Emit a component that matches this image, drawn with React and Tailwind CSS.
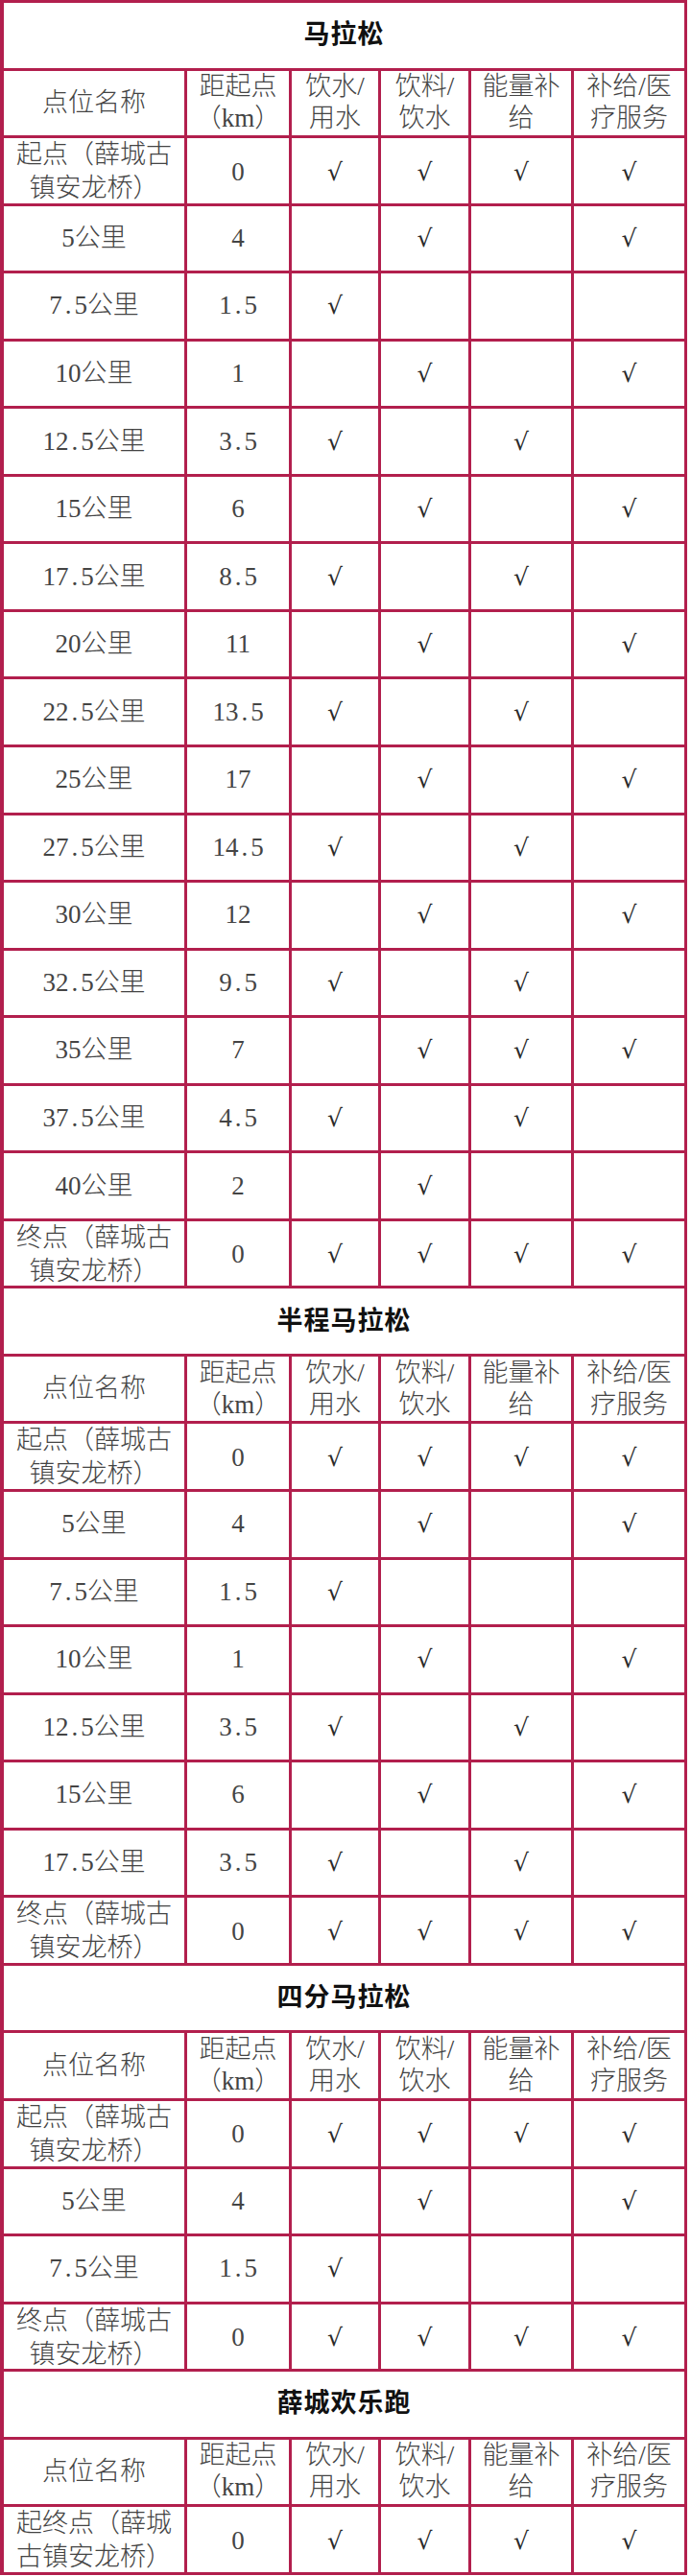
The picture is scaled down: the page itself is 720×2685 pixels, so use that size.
import React from "react";

const V = "√";
const _ = "";

const START = ["起点（薛城古", "镇安龙桥）"];
const END = ["终点（薛城古", "镇安龙桥）"];
const FUN = ["起终点（薛城", "古镇安龙桥）"];

const sections = [
  {
    title: "马拉松",
    rows: [
      [START, "0", V, V, V, V],
      ["5公里", "4", _, V, _, V],
      ["7.5公里", "1.5", V, _, _, _],
      ["10公里", "1", _, V, _, V],
      ["12.5公里", "3.5", V, _, V, _],
      ["15公里", "6", _, V, _, V],
      ["17.5公里", "8.5", V, _, V, _],
      ["20公里", "11", _, V, _, V],
      ["22.5公里", "13.5", V, _, V, _],
      ["25公里", "17", _, V, _, V],
      ["27.5公里", "14.5", V, _, V, _],
      ["30公里", "12", _, V, _, V],
      ["32.5公里", "9.5", V, _, V, _],
      ["35公里", "7", _, V, V, V],
      ["37.5公里", "4.5", V, _, V, _],
      ["40公里", "2", _, V, _, _],
      [END, "0", V, V, V, V],
    ],
  },
  {
    title: "半程马拉松",
    rows: [
      [START, "0", V, V, V, V],
      ["5公里", "4", _, V, _, V],
      ["7.5公里", "1.5", V, _, _, _],
      ["10公里", "1", _, V, _, V],
      ["12.5公里", "3.5", V, _, V, _],
      ["15公里", "6", _, V, _, V],
      ["17.5公里", "3.5", V, _, V, _],
      [END, "0", V, V, V, V],
    ],
  },
  {
    title: "四分马拉松",
    rows: [
      [START, "0", V, V, V, V],
      ["5公里", "4", _, V, _, V],
      ["7.5公里", "1.5", V, _, _, _],
      [END, "0", V, V, V, V],
    ],
  },
  {
    title: "薛城欢乐跑",
    rows: [[FUN, "0", V, V, V, V]],
  },
];

function Num({ s }) {
  const parts = s.split(".");
  if (parts.length === 1) return <>{s}</>;
  return (
    <>
      {parts[0]}
      <span className="mx-[3px]">.</span>
      {parts[1]}
    </>
  );
}

function NameText({ v }) {
  if (Array.isArray(v)) {
    return (
      <span className="leading-[35px]">
        {v[0]}
        <br />
        {v[1]}
      </span>
    );
  }
  const m = v.match(/^([\d.]+)(.*)$/);
  return (
    <span>
      <Num s={m[1]} />
      {m[2]}
    </span>
  );
}

const cell =
  "flex items-center justify-center text-center border-r-[3px] border-[#b21f4d]";
const gridRow =
  "grid grid-cols-[191px_109px_93px_94px_107px_118px] h-[70.55px] border-b-[3px] border-[#b21f4d]";

function Header() {
  return (
    <div className={gridRow}>
      <div className={cell}>点位名称</div>
      <div className={cell + " leading-[33px]"}>
        <span>
          距起点
          <br />
          （km）
        </span>
      </div>
      <div className={cell + " leading-[33px]"}>
        <span>
          饮水/
          <br />
          用水
        </span>
      </div>
      <div className={cell + " leading-[33px]"}>
        <span>
          饮料/
          <br />
          饮水
        </span>
      </div>
      <div className={cell + " leading-[33px]"}>
        <span>
          能量补
          <br />
          给
        </span>
      </div>
      <div className={cell + " leading-[33px]"}>
        <span>
          补给/医
          <br />
          疗服务
        </span>
      </div>
    </div>
  );
}

function Check({ v }) {
  return v ? (
    <span className="font-['DejaVu_Serif','Liberation_Serif',serif] text-[25px] text-[#2a2a2a]">
      {v}
    </span>
  ) : null;
}

function Row({ r }) {
  return (
    <div className={gridRow}>
      <div className={cell}>
        <NameText v={r[0]} />
      </div>
      <div className={cell}>
        <Num s={r[1]} />
      </div>
      {r.slice(2).map((c, i) => (
        <div key={i} className={cell}>
          <Check v={c} />
        </div>
      ))}
    </div>
  );
}

export default function App() {
  return (
    <div className="w-[720px] bg-white">
      <div className="w-[716px] border-l-4 border-t-[3px] border-[#b21f4d] bg-white text-[27px] leading-[33px] text-[#444] font-light font-['Liberation_Serif','Noto_Sans_CJK_SC',serif]">
        {sections.map((s, si) => (
          <div key={si}>
            <div className="w-[712px] h-[70.55px] flex items-center justify-center border-b-[3px] border-r-[3px] border-[#b21f4d] font-bold text-[#111] text-[27px] tracking-[1px]">
              {s.title}
            </div>
            <Header />
            {s.rows.map((r, ri) => (
              <Row key={ri} r={r} />
            ))}
          </div>
        ))}
      </div>
    </div>
  );
}
